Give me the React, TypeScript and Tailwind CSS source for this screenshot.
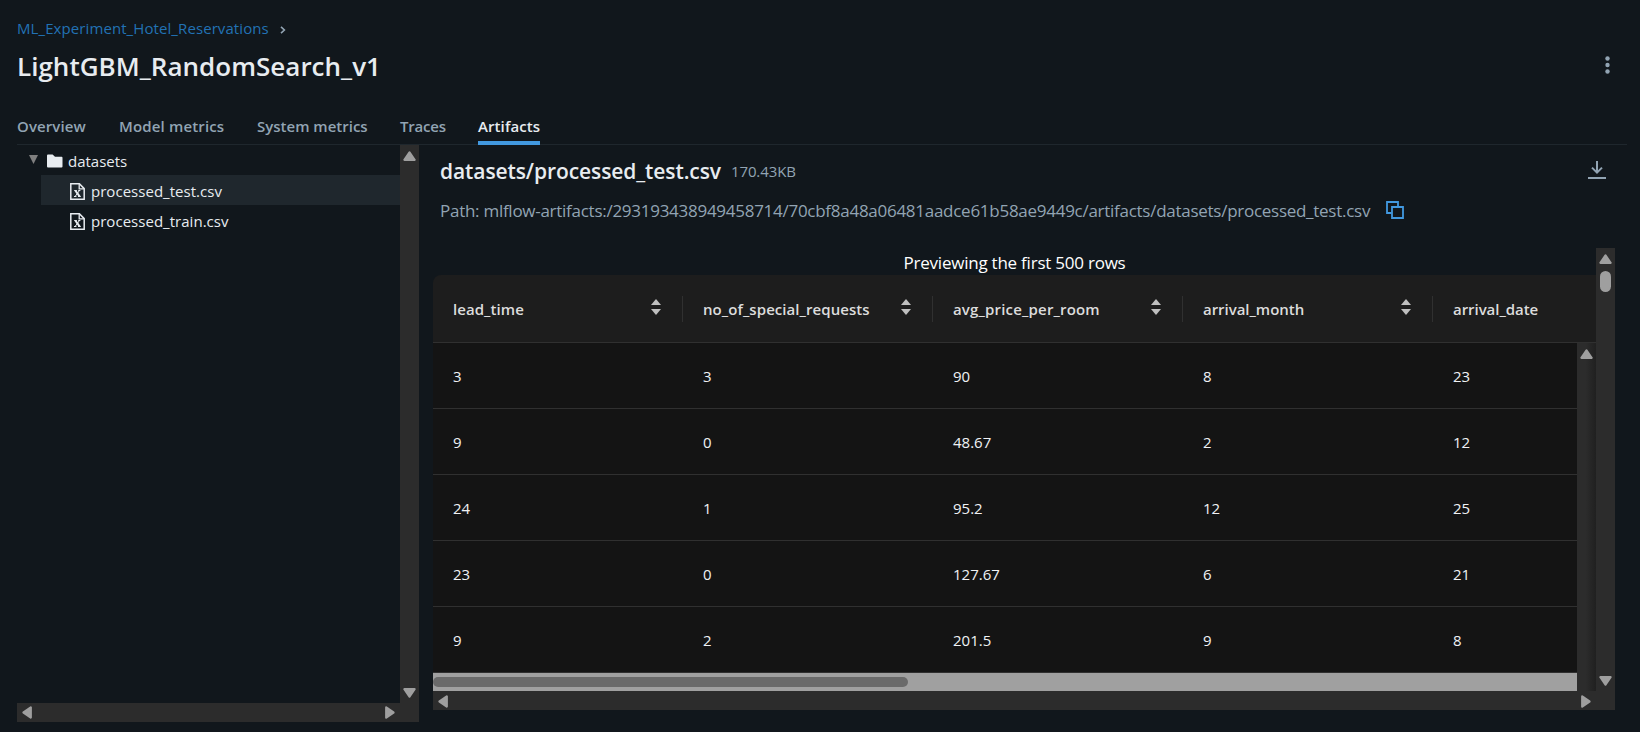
import type { ReactNode } from 'react';

const columns = [
  { name: 'lead_time', tracking: 'tracking-[0.06px]' },
  { name: 'no_of_special_requests', tracking: 'tracking-[0.06px]' },
  { name: 'avg_price_per_room', tracking: 'tracking-[0.17px]' },
  { name: 'arrival_month', tracking: 'tracking-[-0.03px]' },
  { name: 'arrival_date', tracking: 'tracking-[-0.05px]' },
];

const rows = [
  ['3', '3', '90', '8', '23'],
  ['9', '0', '48.67', '2', '12'],
  ['24', '1', '95.2', '12', '25'],
  ['23', '0', '127.67', '6', '21'],
  ['9', '2', '201.5', '9', '8'],
];

const tabs = [
  { label: 'Overview', width: 'w-[69px] tracking-[0.1px]' },
  { label: 'Model metrics', width: 'w-[105px] tracking-[0.15px]' },
  { label: 'System metrics', width: 'w-[110px]' },
  { label: 'Traces', width: 'w-[45px] tracking-[-0.2px]' },
  { label: 'Artifacts', width: 'w-[62px] tracking-[0.1px]', active: true },
];

function Arrow({ className = '' }: { className?: string }) {
  return (
    <svg viewBox="0 0 13 10" className={`h-[10px] w-[13px] shrink-0 ${className}`}>
      <path d="M6.5 1.5 11.6 8.8H1.4Z" fill="#9f9f9f" stroke="#9f9f9f" strokeWidth="2.2" strokeLinejoin="round" />
    </svg>
  );
}

function SideArrow({ right }: { right?: boolean }) {
  return (
    <svg viewBox="0 0 10 13" className={`h-[13px] w-[10px] shrink-0 ${right ? 'rotate-180' : ''}`}>
      <path d="M1.5 6.5 8.8 1.4v10.2Z" fill="#9f9f9f" stroke="#9f9f9f" strokeWidth="2.2" strokeLinejoin="round" />
    </svg>
  );
}

function FolderIcon() {
  return (
    <svg viewBox="0 0 16 14" className="h-[14px] w-4">
      <path d="M0 1.4Q0 .5 1 .5H5.6L8 2.8H14.6Q15.5 2.8 15.5 3.8V12.4Q15.5 13.4 14.5 13.4H1Q0 13.4 0 12.4Z" fill="#e8ecf0" />
    </svg>
  );
}

function FileIcon() {
  return (
    <svg viewBox="0 0 15 17" className="h-[17px] w-[15px]" fill="none" stroke="#e8ecf0">
      <path d="M.8.8H9.4L14.2 5.6V16.2H.8Z" strokeWidth="1.5" />
      <path d="M9.2 1V5.8H14" strokeWidth="1.3" />
      <path d="M5.4 7.6 9.6 13.4" strokeWidth="1.9" />
      <path d="M9.4 7.6 5.2 13.4M4.2 7.5H6.8M8.2 7.5H10.4M4 13.5H6.4M8 13.5H10.8" strokeWidth="1" />
    </svg>
  );
}

function Sorter() {
  return (
    <svg viewBox="0 0 10 16" className="h-4 w-[10px]" fill="#bfbfbf">
      <path d="M5 0 10 6H0Z" />
      <path d="M5 16 10 10H0Z" />
    </svg>
  );
}

function FileRow({ name, selected }: { name: string; selected?: boolean }) {
  return (
    <div className={`ml-6 flex h-[30px] items-center pl-[29px] ${selected ? 'bg-[#1f272d]' : ''}`}>
      <span className="mt-0.5">
        <FileIcon />
      </span>
      <span className="ml-[6px] pt-0.5 tracking-[0.03px]">{name}</span>
    </div>
  );
}

function HeaderCell({ children, tracking, last }: { children: ReactNode; tracking: string; last?: boolean }) {
  return (
    <div className={`flex h-[67px] shrink-0 items-center ${last ? 'w-[163px]' : 'w-[250px]'}`}>
      <span className={`grow pt-px pl-5 ${tracking}`}>{children}</span>
      {!last && (
        <>
          <span className="mr-[21px] pb-[3px]">
            <Sorter />
          </span>
          <span className="h-[26px] w-px bg-[#303030]" />
        </>
      )}
    </div>
  );
}

export default function App() {
  return (
    <div className="h-[732px] w-[1640px] overflow-hidden bg-[#11171c] pr-[13px] pl-[17px] font-['Open_Sans','Noto_Sans',sans-serif] text-[15px] whitespace-nowrap text-[#e8ecf0]">
      <header>
        <nav className="flex h-10 items-center pt-4 leading-6">
          <a className="tracking-[0.09px] text-[#2272b4]">ML_Experiment_Hotel_Reservations</a>
          <svg viewBox="0 0 6 8" className="mt-1 ml-[11px] h-2 w-1.5" fill="none" stroke="#92a4b3" strokeWidth="1.6">
            <path d="M1 .8 4.4 4 1 7.2" />
          </svg>
        </nav>
        <div className="mt-[10px] flex h-8 items-center justify-between">
          <h1 className="text-[26px] leading-8 font-semibold tracking-[0.02px]">LightGBM_RandomSearch_v1</h1>
          <svg viewBox="0 0 5 18" className="mr-[17.5px] mb-0.5 h-[18px] w-[5px]" fill="#92a4b3">
            <circle cx="2.5" cy="2.5" r="2.2" />
            <circle cx="2.5" cy="9" r="2.2" />
            <circle cx="2.5" cy="15.5" r="2.2" />
          </svg>
        </div>
        <div className="mt-8 flex h-[31px] gap-[33px] border-b border-[#1f272d] leading-6 font-semibold">
          {tabs.map((tab) => (
            <div
              key={tab.label}
              className={`h-[31px] ${tab.width} ${tab.active ? 'border-b-4 border-[#4299e0] text-[#e8ecf0]' : 'text-[#92a4b3]'}`}
            >
              {tab.label}
            </div>
          ))}
        </div>
      </header>

      <main className="flex">
        <aside className="flex h-[577px] w-[403px] shrink-0 flex-col">
          <div className="flex grow">
            <div className="w-[383px]">
              <div className="flex h-[30px] items-center">
                <svg viewBox="0 0 9 9" className="mb-[1px] ml-3 h-[9px] w-[9px]">
                  <path d="M0 0H9L4.5 9Z" fill="#7f7f7f" />
                </svg>
                <span className="mt-0.5 ml-[9px]">
                  <FolderIcon />
                </span>
                <span className="ml-[5px] pt-0.5">datasets</span>
              </div>
              <FileRow name="processed_test.csv" selected />
              <FileRow name="processed_train.csv" />
            </div>
            <div className="flex w-[19px] flex-col items-center justify-between bg-[#2c2c2c] pt-[6px] pb-[5px]">
              <Arrow />
              <Arrow className="rotate-180" />
            </div>
          </div>
          <div className="mr-px flex h-[19px] items-center justify-between bg-[#2c2c2c] pr-[24px] pl-[5px]">
            <SideArrow />
            <SideArrow right />
          </div>
        </aside>

        <section className="ml-[13px] w-[1182px]">
          <div className="flex h-[47px] items-center justify-between pt-[5px] pr-[9px] pl-[7px]">
            <div className="flex items-baseline">
              <h2 className="text-[21px] leading-[30px] font-semibold tracking-[-0.09px]">datasets/processed_test.csv</h2>
              <span className="relative -top-0.5 ml-[10px] tracking-[-0.1px] text-[#92a4b3]">170.43KB</span>
            </div>
            <svg viewBox="0 0 18 18" className="mb-[3px] h-[18px] w-[18px]" fill="none" stroke="#92a4b3" strokeWidth="2">
              <path d="M0 17H18" />
              <path d="M9 0V11.5M4 6.6 9 11.6 14 6.6" />
            </svg>
          </div>
          <div className="flex h-14 pt-[7px] pl-[7px] text-[17px] leading-6 text-[#92a4b3]">
            <span className="tracking-[-0.27px]">
              Path: mlflow-artifacts:/293193438949458714/70cbf8a48a06481aadce61b58ae9449c/artifacts/datasets/processed_test.csv
            </span>
            <svg viewBox="0 0 18 18" className="mt-0.5 ml-4 h-[18px] w-[18px]" fill="none" stroke="#4299e0" strokeWidth="1.8">
              <path d="M6 6H17V17H6Z" />
              <path d="M5.5 12H1V1H12V5.5" />
            </svg>
          </div>

          <div className="flex h-[443px]">
            <div className="w-[1163px]">
              <p className="h-[27px] pt-px text-center text-[17px] leading-[27px] tracking-[-0.23px] text-white">
                Previewing the first 500 rows
              </p>
              <div className="flex overflow-hidden rounded-tl-lg border-b border-[#303030] bg-[#1d1d1d] font-semibold text-[#dcdcdc]">
                {columns.map((column, i) => (
                  <HeaderCell key={column.name} tracking={column.tracking} last={i === columns.length - 1}>
                    {column.name}
                  </HeaderCell>
                ))}
              </div>
              <div className="flex">
                <div className="w-[1144px]">
                  {rows.map((row, r) => (
                    <div key={r} className="flex h-[66px] items-center border-b border-[#303030] bg-[#141414] text-[#f0f2f4]">
                      {row.map((value, c) => (
                        <span key={c} className="w-[250px] shrink-0 pt-px pl-5 last:w-[144px]">
                          {value}
                        </span>
                      ))}
                    </div>
                  ))}
                  <div className="flex h-[18px] items-center bg-[#a0a0a0]">
                    <div className="h-[10px] w-[475px] rounded-full bg-[#6a6a6a]" />
                  </div>
                </div>
                <div className="w-[19px] bg-linear-to-r from-[#2c2c2c] from-45% to-[#202020] pt-[6px] pl-[3px]">
                  <Arrow />
                </div>
              </div>
            </div>
            <div className="flex w-[19px] flex-col items-center bg-[#2c2c2c] pt-[6px] pb-[5px]">
              <Arrow />
              <div className="mt-[7px] h-[21px] w-[11px] rounded-full bg-[#9f9f9f]" />
              <Arrow className="mt-auto rotate-180" />
            </div>
          </div>
          <div className="flex h-[19px] items-center justify-between bg-[#2c2c2c] pt-px pr-[24px] pl-[5px]">
            <SideArrow />
            <SideArrow right />
          </div>
        </section>
      </main>
    </div>
  );
}
